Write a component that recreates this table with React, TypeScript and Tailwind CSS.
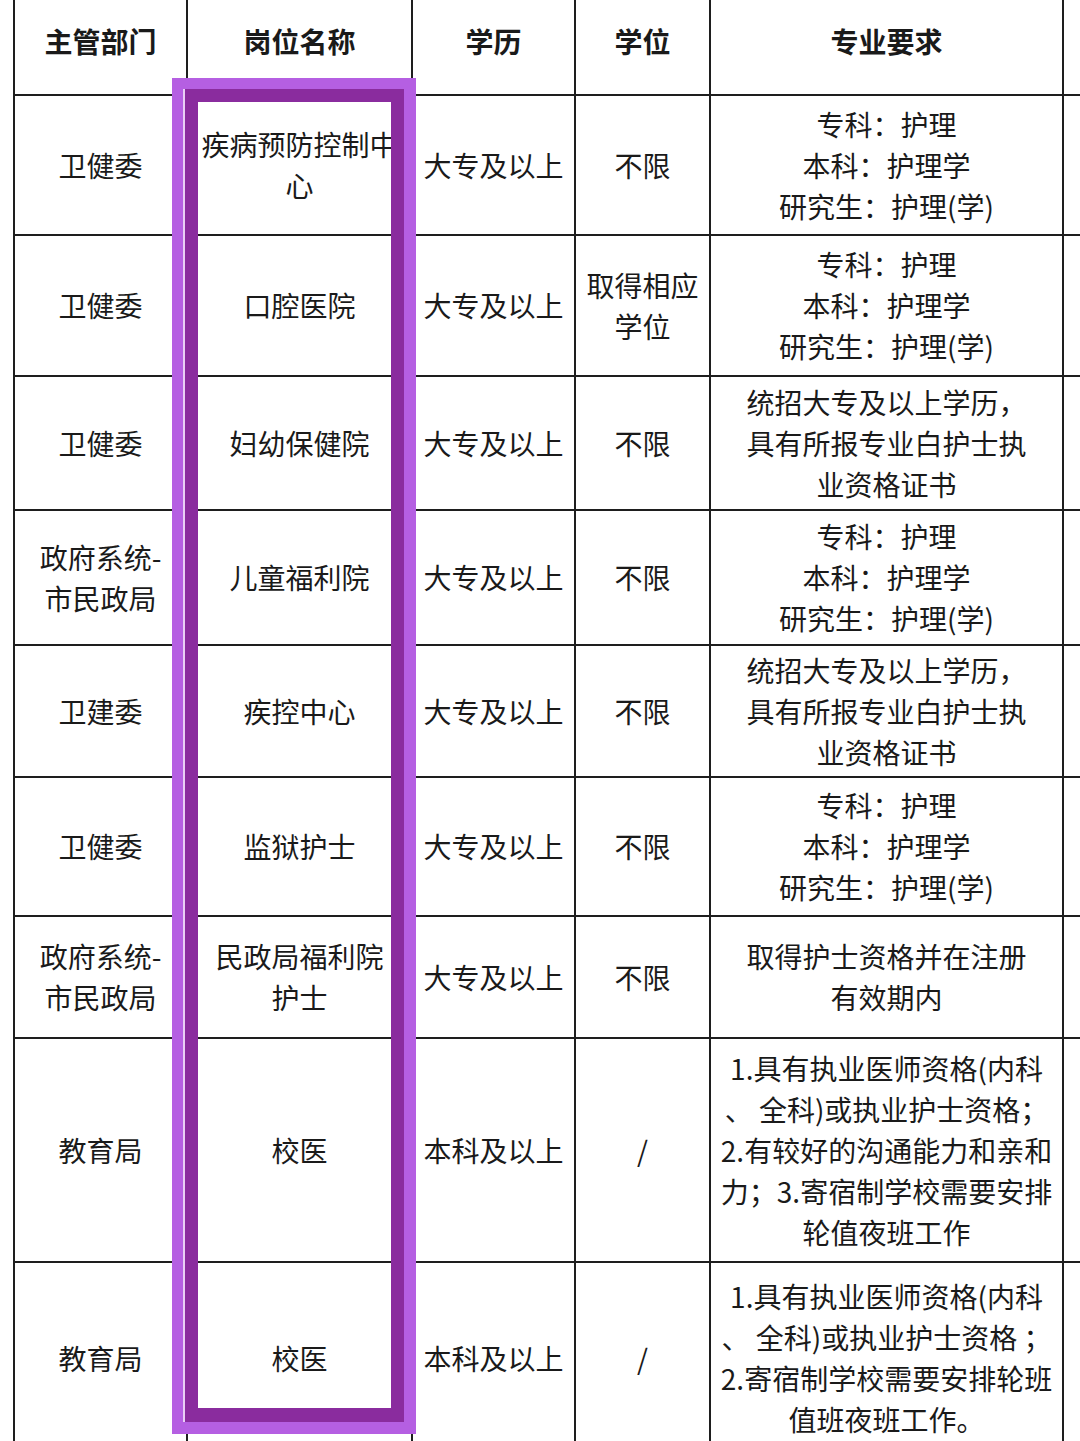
import React from 'react';

type Row = {
  dept: string[];
  post: string[];
  edu: string;
  degree: string[];
  major: string[];
};

const NURSING = ['专科：护理', '本科：护理学', '研究生：护理(学)'];
const TONGZHAO = ['统招大专及以上学历，', '具有所报专业白护士执', '业资格证书'];

const rows: Row[] = [
  { dept: ['卫健委'], post: ['疾病预防控制中', '心'], edu: '大专及以上', degree: ['不限'], major: NURSING },
  { dept: ['卫健委'], post: ['口腔医院'], edu: '大专及以上', degree: ['取得相应', '学位'], major: NURSING },
  { dept: ['卫健委'], post: ['妇幼保健院'], edu: '大专及以上', degree: ['不限'], major: TONGZHAO },
  { dept: ['政府系统-', '市民政局'], post: ['儿童福利院'], edu: '大专及以上', degree: ['不限'], major: NURSING },
  { dept: ['卫建委'], post: ['疾控中心'], edu: '大专及以上', degree: ['不限'], major: TONGZHAO },
  { dept: ['卫健委'], post: ['监狱护士'], edu: '大专及以上', degree: ['不限'], major: NURSING },
  { dept: ['政府系统-', '市民政局'], post: ['民政局福利院', '护士'], edu: '大专及以上', degree: ['不限'], major: ['取得护士资格并在注册', '有效期内'] },
  {
    dept: ['教育局'],
    post: ['校医'],
    edu: '本科及以上',
    degree: ['/'],
    major: ['1.具有执业医师资格(内科', '、 全科)或执业护士资格；', '2.有较好的沟通能力和亲和', '力；3.寄宿制学校需要安排', '轮值夜班工作'],
  },
  {
    dept: ['教育局'],
    post: ['校医'],
    edu: '本科及以上',
    degree: ['/'],
    major: ['1.具有执业医师资格(内科', '、 全科)或执业护士资格 ；', '2.寄宿制学校需要安排轮班', '值班夜班工作。'],
  },
];

function Cell({ lines, head }: { lines: string[]; head?: boolean }) {
  return (
    <div
      className={
        'flex flex-col items-center justify-center text-center border-r-2 border-b-2 border-[#1e1e1e] whitespace-pre overflow-visible ' +
        (head ? 'font-bold pb-[12px]' : 'font-normal')
      }
    >
      {lines.map((l, i) => (
        <span key={i} className="block leading-[41px]">
          {l}
        </span>
      ))}
    </div>
  );
}

export default function App() {
  return (
    <div
      className="relative w-[1080px] h-[1441px] overflow-hidden bg-white text-[28px] text-[#1a1a1a]"
      style={{ fontFamily: '"Noto Sans CJK SC", "Noto Sans", sans-serif' }}
    >
      <div className="ml-[13px] w-[1200px] border-l-2 border-[#1e1e1e] grid grid-cols-[173px_225px_163px_135px_353px_120px] grid-rows-[96px_140px_141px_134px_135px_132px_139px_122px_224px_192px]">
        <Cell head lines={['主管部门']} />
        <Cell head lines={['岗位名称']} />
        <Cell head lines={['学历']} />
        <Cell head lines={['学位']} />
        <Cell head lines={['专业要求']} />
        <Cell head lines={['']} />
        {rows.map((r, i) => (
          <React.Fragment key={i}>
            <Cell lines={r.dept} />
            <Cell lines={r.post} />
            <Cell lines={[r.edu]} />
            <Cell lines={r.degree} />
            <Cell lines={r.major} />
            <Cell lines={['']} />
          </React.Fragment>
        ))}
      </div>

      {/* highlight box over the 岗位名称 column */}
      <div className="absolute left-[172px] top-[78px] w-[244px] h-[1356px] border-t-[11px] border-b-[12px] border-l-[13px] border-r-[12px] border-[#b55fe2]">
        <div className="absolute -left-[2px] top-0 bottom-0 w-[2px] bg-white/70" />
        <div className="absolute inset-0 border-t-[13px] border-l-[13px] border-r-[13px] border-b-[14px] border-[#8a2c9e]" />
      </div>
    </div>
  );
}
